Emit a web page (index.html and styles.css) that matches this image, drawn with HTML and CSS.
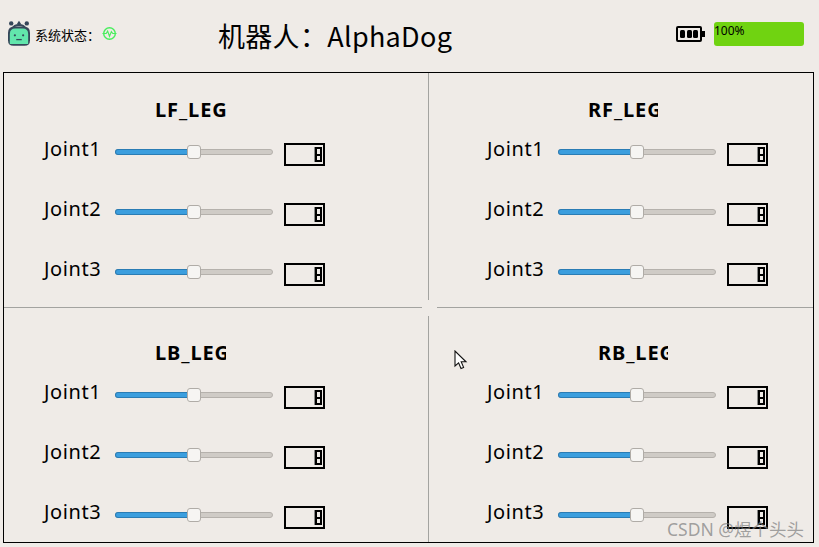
FILE: index.html
```html
<!DOCTYPE html>
<html lang="en">
<head>
    <meta charset="UTF-8">
    <meta name="viewport" content="width=device-width, initial-scale=1.0">
    <title>AlphaDog</title>
    <link rel="stylesheet" href="styles.css">
</head>
<body>
    <div class="header">
        <div class="status">
            <svg class="robot" viewBox="0 0 24 28" width="24" height="28">
                <path d="M5 9 C7 4 17 4 19 9" fill="none" stroke="#36475a" stroke-width="2"/>
                <circle cx="3.5" cy="3.5" r="2.4" fill="#36475a"/>
                <circle cx="20.5" cy="3.5" r="2.4" fill="#36475a"/>
                <path d="M12 0.5 L14.2 4 L12 6.5 L9.8 4 Z" fill="#36475a"/>
                <path d="M7 7 H17 Q24 7 24 14 V22 Q24 28 18 28 H6 Q0 28 0 22 V14 Q0 7 7 7 Z" fill="#36475a"/>
                <path d="M8 9 H16 Q22 9 22 15 V26 H2 V15 Q2 9 8 9 Z" fill="#62e6ac"/>
                <circle cx="7.5" cy="16.5" r="1.2" fill="#36475a"/>
                <circle cx="16.5" cy="16.5" r="1.2" fill="#36475a"/>
                <rect x="9" y="20.5" width="6" height="1.4" fill="#36475a"/>
            </svg>
            <span class="status-text">系统状态：</span>
            <svg class="pulse" viewBox="0 0 16 16" width="15" height="15">
                <circle cx="8" cy="8" r="6.2" fill="none" stroke="#47ee5c" stroke-width="1.5"/>
                <path d="M0.5 8 H4.5 L6 5.5 L8 11 L10 6 L11.5 8 H15.5" fill="none" stroke="#47ee5c" stroke-width="1.2"/>
            </svg>
        </div>
        <div class="robot-name">机器人：AlphaDog</div>
        <div class="power">
            <svg class="battery" viewBox="0 0 29 16" width="29" height="16">
                <rect x="1" y="1" width="24" height="14" rx="1" fill="none" stroke="#000" stroke-width="2"/>
                <rect x="26" y="5" width="3" height="6" fill="#000"/>
                <rect x="4" y="4" width="5" height="8" rx="1.5" fill="#000"/>
                <rect x="11" y="4" width="5" height="8" rx="1.5" fill="#000"/>
                <rect x="17" y="4" width="5" height="8" rx="1.5" fill="#000"/>
            </svg>
            <div class="progress">100%</div>
        </div>
    </div>

    <div class="board">
        <div class="leg leg-lf">
            <div class="leg-title">LF_LEG</div>
            <div class="joint"><span class="joint-name">Joint1</span><div class="slider"><div class="fill"></div><div class="handle"></div></div><div class="lcd"><span class="digit">0</span></div></div>
            <div class="joint"><span class="joint-name">Joint2</span><div class="slider"><div class="fill"></div><div class="handle"></div></div><div class="lcd"><span class="digit">0</span></div></div>
            <div class="joint"><span class="joint-name">Joint3</span><div class="slider"><div class="fill"></div><div class="handle"></div></div><div class="lcd"><span class="digit">0</span></div></div>
        </div>
        <div class="leg leg-rf">
            <div class="leg-title">RF_LEG</div>
            <div class="joint"><span class="joint-name">Joint1</span><div class="slider"><div class="fill"></div><div class="handle"></div></div><div class="lcd"><span class="digit">0</span></div></div>
            <div class="joint"><span class="joint-name">Joint2</span><div class="slider"><div class="fill"></div><div class="handle"></div></div><div class="lcd"><span class="digit">0</span></div></div>
            <div class="joint"><span class="joint-name">Joint3</span><div class="slider"><div class="fill"></div><div class="handle"></div></div><div class="lcd"><span class="digit">0</span></div></div>
        </div>
        <div class="leg leg-lb">
            <div class="leg-title">LB_LEG</div>
            <div class="joint"><span class="joint-name">Joint1</span><div class="slider"><div class="fill"></div><div class="handle"></div></div><div class="lcd"><span class="digit">0</span></div></div>
            <div class="joint"><span class="joint-name">Joint2</span><div class="slider"><div class="fill"></div><div class="handle"></div></div><div class="lcd"><span class="digit">0</span></div></div>
            <div class="joint"><span class="joint-name">Joint3</span><div class="slider"><div class="fill"></div><div class="handle"></div></div><div class="lcd"><span class="digit">0</span></div></div>
        </div>
        <div class="leg leg-rb">
            <div class="leg-title">RB_LEG</div>
            <div class="joint"><span class="joint-name">Joint1</span><div class="slider"><div class="fill"></div><div class="handle"></div></div><div class="lcd"><span class="digit">0</span></div></div>
            <div class="joint"><span class="joint-name">Joint2</span><div class="slider"><div class="fill"></div><div class="handle"></div></div><div class="lcd"><span class="digit">0</span></div></div>
            <div class="joint"><span class="joint-name">Joint3</span><div class="slider"><div class="fill"></div><div class="handle"></div></div><div class="lcd"><span class="digit">0</span></div></div>
        </div>
        <div class="splitter-gap"></div>
    </div>

    <svg class="cursor" viewBox="0 0 14 20" width="14" height="20">
        <path d="M1 1 V16 L4.6 12.8 L7 18.5 L9.6 17.4 L7.2 11.8 H12 Z" fill="#fff" stroke="#111" stroke-width="1.1"/>
    </svg>
    <div class="watermark">CSDN @煜个头头</div>
</body>
</html>
```

FILE: styles.css
```css
body {
    margin: 0;
    width: 819px;
    height: 547px;
    overflow: hidden;
    position: relative;
    background: #efebe7;
    font-family: "Noto Sans", "Noto Sans CJK SC", sans-serif;
    color: #000;
}

.header {
    display: flex;
    align-items: center;
    height: 72px;
    padding: 0 15px 2px 8px;
    box-sizing: border-box;
}

.status {
    display: flex;
    align-items: center;
    width: 210px;
}

.robot {
    width: 22px;
    height: 26px;
    margin-right: 5px;
    margin-bottom: 4px;
}

.status-text {
    font-size: 13px;
    width: 67px;
    font-family: "Noto Sans CJK SC", sans-serif;
    margin-bottom: 2px;
}

.pulse {
    margin-bottom: 4px;
}

.robot-name {
    font-size: 27px;
    letter-spacing: 0.3px;
    font-family: "Noto Sans CJK SC", sans-serif;
    flex: 1;
}

.power {
    display: flex;
    align-items: center;
    gap: 9px;
}

.progress {
    width: 90px;
    height: 24px;
    margin-bottom: 2px;
    background: #70d311;
    border-radius: 3px;
    font-size: 12px;
    line-height: 18px;
}

.battery {
    margin-bottom: 2px;
}

.board {
    display: grid;
    grid-template-columns: 425px 384px;
    grid-template-rows: 235px 234px;
    position: relative;
    width: 809px;
    height: 469px;
    margin-left: 3px;
    border: 1px solid #000;
    box-sizing: content-box;
}

.leg {
    box-sizing: border-box;
    padding-top: 25px;
}

.leg-lf,
.leg-lb {
    padding-left: 40px;
    border-right: 1px solid #a3a3a0;
}

.leg-rf,
.leg-rb {
    padding-left: 58px;
}

.leg-lf,
.leg-rf {
    border-bottom: 1px solid #a3a3a0;
}

.leg-lb,
.leg-rb {
    padding-top: 33px;
}

.leg-title {
    width: 71px;
    margin-left: 111px;
    overflow: hidden;
    white-space: nowrap;
    font-size: 20px;
    letter-spacing: 0.9px;
    font-weight: 700;
    line-height: 24px;
    height: 24px;
}

.leg-rf .leg-title {
    margin-left: 101px;
    width: 70px;
}

.leg-rb .leg-title {
    width: 70px;
}

.joint {
    display: flex;
    align-items: center;
    height: 60px;
}

.leg-title + .joint {
    margin-top: -1px;
}

.joint-name {
    width: 71px;
    font-size: 20px;
    letter-spacing: 0.6px;
    position: relative;
    top: -3px;
}

.slider {
    width: 158px;
    height: 6px;
    margin-top: 2px;
    background: #cfcbc6;
    border: 1px solid #b5b1ac;
    border-radius: 3px;
    box-sizing: border-box;
    position: relative;
}

.fill {
    width: 50%;
    height: 100%;
    background: #3b9ede;
    box-shadow: 0 0 0 1px #2a7cb4;
    border-radius: 3px 0 0 3px;
}

.handle {
    position: absolute;
    left: 71px;
    top: -5px;
    width: 14px;
    height: 14px;
    background: #f6f5f3;
    border: 1px solid #b0aca7;
    border-radius: 3px;
    box-sizing: border-box;
}

.lcd {
    width: 41px;
    height: 23px;
    margin-left: 11px;
    margin-top: 7px;
    border: 2px solid #000;
    box-sizing: border-box;
    display: flex;
    justify-content: flex-end;
    align-items: center;
    padding-right: 1px;
}

.digit {
    width: 7px;
    height: 15px;
    border: 2px solid #000;
    box-sizing: border-box;
    color: transparent;
    font-size: 1px;
    background: linear-gradient(#000, #000) center / 100% 2px no-repeat;
    box-shadow: -1px 0 0 #8a8a88;
    overflow: hidden;
}

.splitter-gap {
    position: absolute;
    left: 418px;
    top: 227px;
    width: 15px;
    height: 16px;
    background: #efebe7;
}

.cursor {
    position: absolute;
    left: 454px;
    top: 350px;
}

.watermark {
    position: absolute;
    left: 667px;
    top: 518px;
    font-size: 17.5px;
    line-height: 22px;
    color: rgba(125, 125, 125, 0.7);
    white-space: nowrap;
}
```
